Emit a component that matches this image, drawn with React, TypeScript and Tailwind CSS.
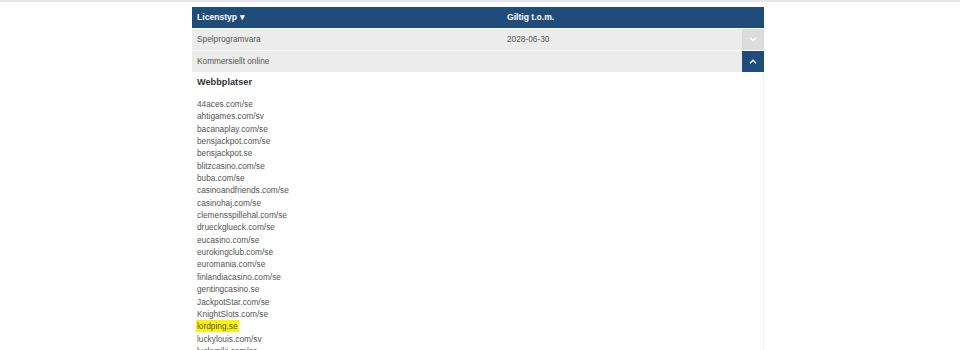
import React from 'react';

const sites = [
    '44aces.com/se',
    'ahtigames.com/sv',
    'bacanaplay.com/se',
    'bensjackpot.com/se',
    'bensjackpot.se',
    'blitzcasino.com/se',
    'buba.com/se',
    'casinoandfriends.com/se',
    'casinohaj.com/se',
    'clemensspillehal.com/se',
    'drueckglueck.com/se',
    'eucasino.com/se',
    'eurokingclub.com/se',
    'euromania.com/se',
    'finlandiacasino.com/se',
    'gentingcasino.se',
    'JackpotStar.com/se',
    'KnightSlots.com/se',
    'lordping.se',
    'luckylouis.com/sv',
    'luckyniki.com/se',
];

const Chevron = ({ up }: { up?: boolean }) => (
    <svg width="8" height="5" viewBox="0 0 8 5" fill="none" stroke="white" strokeWidth="1.3">
        {up ? <path d="M1 4.2 L4 1.2 L7 4.2" /> : <path d="M1 0.8 L4 3.8 L7 0.8" />}
    </svg>
);

export default function App() {
    return (
        <div className="w-[960px] h-[350px] overflow-hidden bg-white border-t-2 border-[#e6e6ea] font-['Liberation_Sans',Arial,sans-serif]">
            <div className="ml-[192px] w-[572px] mt-[5px]">
                {/* header */}
                <div className="flex h-[21px] items-center bg-[#1f4c7a] text-white text-[8.6px] font-bold">
                    <div className="w-[315px] pl-[5px]">Licenstyp ▾</div>
                    <div>Giltig t.o.m.</div>
                </div>

                <div className="mt-[1px] flex h-[21px] items-center bg-[#ececec] text-[#555] text-[8.3px]">
                    <div className="w-[315px] pl-[5px]">Spelprogramvara</div>
                    <div className="flex-1">2028-06-30</div>
                    <div className="w-[22px] h-full flex items-center justify-center bg-[#dcdcdc]">
                        <Chevron />
                    </div>
                </div>

                <div className="mt-[1px] flex h-[21px] items-center bg-[#ececec] text-[#555] text-[8.3px]">
                    <div className="flex-1 pl-[5px]">Kommersiellt online</div>
                    <div className="w-[22px] h-full flex items-center justify-center bg-[#1f4c7a]">
                        <Chevron up />
                    </div>
                </div>

                <div className="border-r border-[#f2f2f2] pl-[5px] pt-[4px]">
                    <p className="text-[9.2px] font-bold text-[#333] leading-[12px]">Webbplatser</p>
                    <ul className="mt-[10px] text-[8.3px] text-[#555] leading-[12.35px]">
                        {sites.map(s => (
                            <li key={s}>
                                {s === 'lordping.se'
                                    ? <span className="bg-[#fff200] px-[1px] -mx-[1px] py-[1px]">{s}</span>
                                    : s}
                            </li>
                        ))}
                    </ul>
                </div>
            </div>
        </div>
    );
}
